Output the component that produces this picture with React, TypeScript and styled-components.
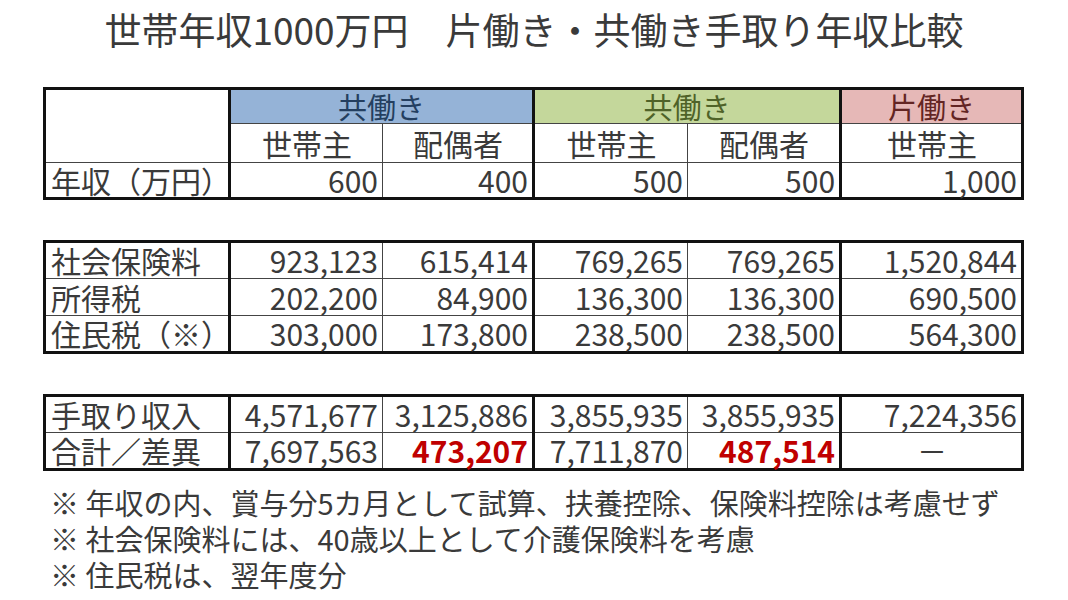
import React from "react";
import styled, { createGlobalStyle } from "styled-components";

const Global = createGlobalStyle`
  html, body { margin: 0; padding: 0; background: #fff; }
  body { font-family: "Noto Sans CJK JP", "Noto Sans", sans-serif; color: #3a3a3a; }
`;

const Page = styled.div`
  width: 1068px;
  height: 600px;
  overflow: hidden;
  box-sizing: border-box;
  padding-top: 11px;
  display: flex;
  flex-direction: column;
`;

const Title = styled.h1`
  margin: 0;
  font-size: 37px;
  font-weight: 400;
  line-height: 37px;
  text-align: center;
  color: #3a3a3a;
`;

const Tables = styled.div`
  display: flex;
  flex-direction: column;
  gap: 40px;
  margin: 39px 0 0 43px;
  width: 978px;
`;

const Table = styled.table`
  border-collapse: collapse;
  width: 978px;
  table-layout: fixed;
  border: 3px solid #111;
`;

const Row = styled.tr<{ $h: number }>`
  height: ${(p) => p.$h}px;
`;

type Tone = "blue" | "green" | "pink";
const bg: Record<Tone, string> = { blue: "#95b3d7", green: "#c4d79b", pink: "#e6b8b7" };
const fg: Record<Tone, string> = { blue: "#243f60", green: "#4f6228", pink: "#632523" };

const Cell = styled.td<{ $edge?: boolean; $align?: "left" | "center" | "right"; $red?: boolean }>`
  border: 1px solid #444;
  ${(p) => (p.$edge ? "border-right: 3px solid #111;" : "")}
  padding: 0 4px 0 5px;
  font-size: 30px;
  line-height: 1.1;
  white-space: nowrap;
  text-align: ${(p) => p.$align || "right"};
  color: ${(p) => (p.$red ? "#c00000" : "#3a3a3a")};
  font-weight: ${(p) => (p.$red ? 700 : 400)};
  background: #fff;
`;

const GroupHead = styled.td<{ $tone: Tone }>`
  border: 1px solid #444;
  border-right: 3px solid #111;
  padding: 0;
  font-size: 29px;
  line-height: 1.1;
  text-align: center;
  background: ${(p) => bg[p.$tone]};
  color: ${(p) => fg[p.$tone]};
`;

const Notes = styled.div`
  margin: 16px 0 0 50px;
  display: flex;
  flex-direction: column;
  gap: 5px;
  font-size: 29px;
  line-height: 31px;
  color: #3a3a3a;
`;

const Cols = () => (
  <colgroup>
    <col style={{ width: 185 }} />
    <col style={{ width: 153 }} />
    <col style={{ width: 151 }} />
    <col style={{ width: 154 }} />
    <col style={{ width: 153 }} />
    <col style={{ width: 182 }} />
  </colgroup>
);

type DataRow = { label: string; v: string[]; red?: number[] };

const DataRows = ({ rows, h }: { rows: DataRow[]; h: number }) => (
  <>
    {rows.map((r) => (
      <Row $h={h} key={r.label}>
        <Cell $edge $align="left">{r.label}</Cell>
        {r.v.map((x, i) => (
          <Cell
            key={i}
            $edge={i === 1 || i === 3 || i === 4}
            $align={x === "－" ? "center" : "right"}
            $red={r.red?.includes(i)}
          >
            {x}
          </Cell>
        ))}
      </Row>
    ))}
  </>
);

export default function App() {
  return (
    <Page>
      <Global />
      <Title>世帯年収1000万円　片働き・共働き手取り年収比較</Title>
      <Tables>
        <Table>
          <Cols />
          <tbody>
            <Row $h={35}>
              <Cell $edge rowSpan={2} />
              <GroupHead $tone="blue" colSpan={2}>共働き</GroupHead>
              <GroupHead $tone="green" colSpan={2}>共働き</GroupHead>
              <GroupHead $tone="pink">片働き</GroupHead>
            </Row>
            <Row $h={39}>
              <Cell $align="center">世帯主</Cell>
              <Cell $align="center" $edge>配偶者</Cell>
              <Cell $align="center">世帯主</Cell>
              <Cell $align="center" $edge>配偶者</Cell>
              <Cell $align="center" $edge>世帯主</Cell>
            </Row>
            <DataRows h={36} rows={[{ label: "年収（万円）", v: ["600", "400", "500", "500", "1,000"] }]} />
          </tbody>
        </Table>
        <Table>
          <Cols />
          <tbody>
            <DataRows
              h={37}
              rows={[
                { label: "社会保険料", v: ["923,123", "615,414", "769,265", "769,265", "1,520,844"] },
                { label: "所得税", v: ["202,200", "84,900", "136,300", "136,300", "690,500"] },
                { label: "住民税（※）", v: ["303,000", "173,800", "238,500", "238,500", "564,300"] },
              ]}
            />
          </tbody>
        </Table>
        <Table>
          <Cols />
          <tbody>
            <DataRows
              h={37}
              rows={[
                { label: "手取り収入", v: ["4,571,677", "3,125,886", "3,855,935", "3,855,935", "7,224,356"] },
                { label: "合計／差異", v: ["7,697,563", "473,207", "7,711,870", "487,514", "－"], red: [1, 3] },
              ]}
            />
          </tbody>
        </Table>
      </Tables>
      <Notes>
        <div>※ 年収の内、賞与分5カ月として試算、扶養控除、保険料控除は考慮せず</div>
        <div>※ 社会保険料には、40歳以上として介護保険料を考慮</div>
        <div>※ 住民税は、翌年度分</div>
      </Notes>
    </Page>
  );
}
